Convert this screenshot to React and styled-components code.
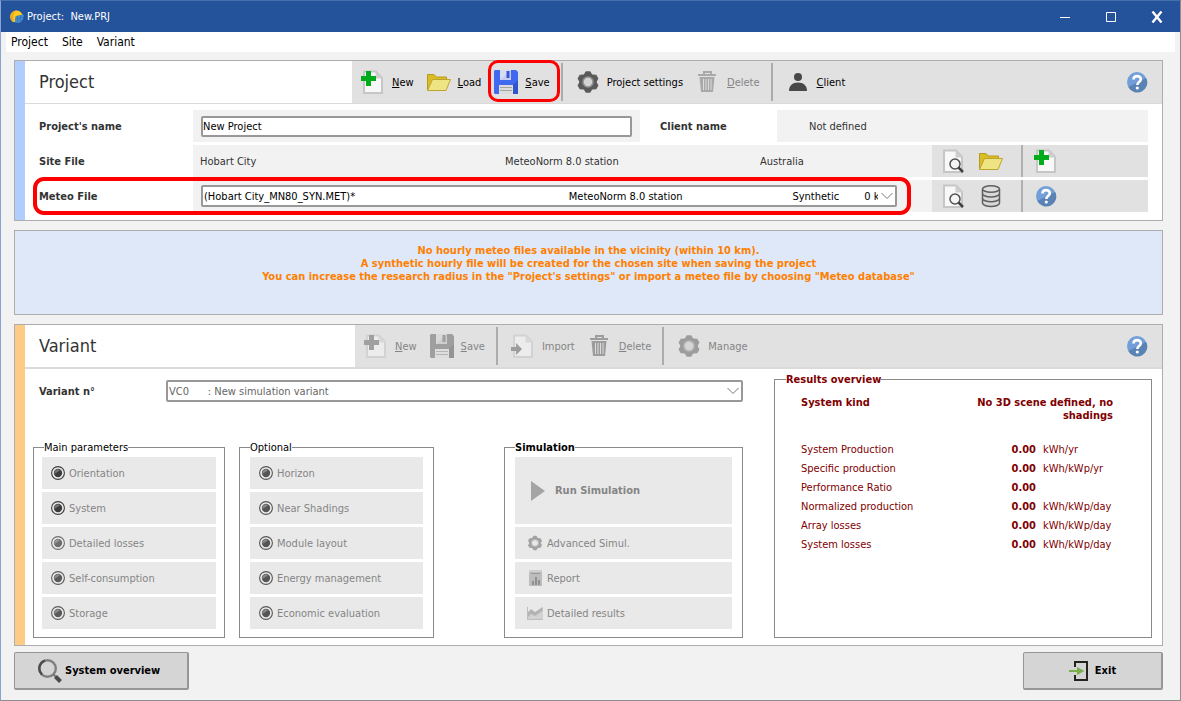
import React from 'react'
import {useState} from 'react'
import styled, {createGlobalStyle} from 'styled-components'

const NBSP = '\u00a0';

const mainParameters = [
  {name: 'Orientation', color: '#3c3c3c'},
  {name: 'System', color: '#3c3c3c'},
  {name: 'Detailed losses', color: '#6e6e6e'},
  {name: 'Self-consumption', color: '#5a5a5a'},
  {name: 'Storage', color: '#5a5a5a'},
];

const optional = ['Horizon', 'Near Shadings', 'Module layout', 'Energy management', 'Economic evaluation'];

const results = [
  {name: 'System Production', value: '0.00', unit: 'kWh/yr'},
  {name: 'Specific production', value: '0.00', unit: 'kWh/kWp/yr'},
  {name: 'Performance Ratio', value: '0.00', unit: ''},
  {name: 'Normalized production', value: '0.00', unit: 'kWh/kWp/day'},
  {name: 'Array losses', value: '0.00', unit: 'kWh/kWp/day'},
  {name: 'System losses', value: '0.00', unit: 'kWh/kWp/day'},
];

// the meteo list shows its columns padded with hard spaces
const meteoFile = '(Hobart City_MN80_SYN.MET)*' + NBSP.repeat(68)
  + 'MeteoNorm 8.0 station' + NBSP.repeat(35)
  + 'Synthetic' + NBSP.repeat(8) + '0 km';

const variantName = 'VC0' + NBSP.repeat(6) + ': New simulation variant';

/* ---------- icons ---------- */

function Icon({size = 24, children}) {
  return (
    <svg width={size} height={size} viewBox={`0 0 ${size} ${size}`} aria-hidden="true">
      {children}
    </svg>
  )
}

function Page({off}) {
  return (
    <>
      <path d="M3 1.5H15L21 8V23H3Z" fill={off ? '#ececec' : '#f8f8f8'} stroke={off ? '#d2d2d2' : '#c6c6c6'} strokeWidth="2"/>
      <path d="M14.5 1V8.5H21.5Z" fill={off ? '#d8d8d8' : '#cecece'}/>
    </>
  )
}

function NewIcon({off}) {
  return (
    <Icon>
      <Page off={off}/>
      <path d="M5 1h5v5h5v5h-5v5H5v-5H0V6h5z" fill={off ? '#a0a0a0' : '#00ac1c'}/>
    </Icon>
  )
}

function ImportIcon() {
  return (
    <Icon>
      <Page off/>
      <path d="M0 13h5V9l6 6-6 6v-4H0z" fill="#9c9c9c"/>
    </Icon>
  )
}

function SearchFileIcon() {
  return (
    <Icon>
      <Page/>
      <circle cx="14" cy="15" r="5" fill="#f4f4f4" stroke="#505050" strokeWidth="1.5"/>
      <path d="M17.5 18.5L22 23" stroke="#404040" strokeWidth="2.5"/>
    </Icon>
  )
}

function FolderIcon() {
  return (
    <Icon>
      <path d="M.5 20V4.500H7L9.500 7H19.500V11" fill="#d9bd26" stroke="#b89b1c"/>
      <path d="M5.500 9.500H23.500L19 20.500H.5Z" fill="#eee483" stroke="#bfa42c"/>
    </Icon>
  )
}

function SaveIcon({off}) {
  return (
    <Icon>
      <path d="M0 1 1 0H22L24 2V24H1L0 23Z" fill={off ? '#9f9f9f' : '#4169f0'}/>
      <path d="M24 10V24H10Z" fill={off ? '#949494' : '#3355cc'}/>
      <path d="M6 0H17V10H6Z" fill={off ? '#d9d9d9' : '#d5dcf4'}/>
      <path d="M6 10 17 0V10Z" fill={off ? '#cecece' : '#c4cdee'}/>
      <path d="M12.500 1H15.500V8H12.500Z" fill={off ? '#9f9f9f' : '#3558d8'}/>
      <path d="M5 15H19V24H5Z" fill={off ? '#dedede' : '#dcdcdc'}/>
      <path d="M6 17.500H18M6 20.500H18" stroke={off ? '#b5b5b5' : '#a4a4a4'}/>
    </Icon>
  )
}

function GearShape({color, ring, hole}) {
  return (
    <>
      {[0, 60, 120].map((angle) =>
        <path key={angle} d="M7.500 5 9.800 1.200H14.200L16.500 5V19L14.200 22.800H9.800L7.500 19Z" fill={color} transform={`rotate(${angle} 12 12)`}/>
      )}
      <circle cx="12" cy="12" r="5" fill={hole} stroke={ring} strokeWidth="1.600"/>
    </>
  )
}

function GearIcon({off}) {
  return (
    <Icon>
      <GearShape color={off ? '#9c9c9c' : '#5a5a5a'} ring={off ? '#b8b8b8' : '#929292'} hole={off ? '#d6d6d6' : '#d4d4d4'}/>
    </Icon>
  )
}

function SmallGearIcon() {
  return (
    <svg width="16" height="16" viewBox="0 0 24 24" aria-hidden="true">
      <GearShape color="#a2a2a2" ring="#bcbcbc" hole="#e9e9e9"/>
    </svg>
  )
}

function TrashIcon({color = '#a9a9a9'}) {
  return (
    <Icon>
      <path d="M8 4V2H15V4" fill="none" stroke={color} strokeWidth="2"/>
      <path d="M2 4H20V6H2Z" fill={color}/>
      <path d="M3.500 7H18.500L17 22H5Z" fill={color}/>
      <path d="M7.500 9V20M10 9V20M12.500 9V20M15 9V20" stroke="#dcdcdc"/>
    </Icon>
  )
}

function ClientIcon() {
  return (
    <Icon>
      <circle cx="12" cy="7" r="4" fill="#484848"/>
      <path d="M3 21C3 15.500 6.500 12.500 12 12.500S21 15.500 21 21Z" fill="#484848"/>
    </Icon>
  )
}

function DatabaseIcon() {
  return (
    <Icon>
      <path d="M4 5V19C4 21 7.500 22.500 12 22.500S20 21 20 19V5" fill="#d8d8d8"/>
      <path d="M3.500 5V19C3.500 21 7.500 22.500 12 22.500S20.500 21 20.500 19V5M3.500 9.500C3.500 11.500 7.500 13 12 13S20.500 11.500 20.500 9.500M3.500 14.300C3.500 16.300 7.500 17.800 12 17.800S20.500 16.300 20.500 14.300" fill="none" stroke="#5e5e5e" strokeWidth="1.500"/>
      <ellipse cx="12" cy="5" rx="8.500" ry="3.200" fill="#dedede" stroke="#5e5e5e" strokeWidth="1.500"/>
    </Icon>
  )
}

function HelpIcon() {
  return (
    <Icon>
      <circle cx="12" cy="12" r="10" fill="#739fd9"/>
      <path d="M21.200 8A10 10 0 0 1 3.300 17Z" fill="#5a82b4"/>
      <path d="M8.500 9.500C8.500 5 15.800 5 15.800 9.300 15.800 12 12.300 12 12.300 15" fill="none" stroke="#fff" strokeWidth="2.600"/>
      <circle cx="12.300" cy="18" r="1.600" fill="#fff"/>
    </Icon>
  )
}

function LampIcon({color}) {
  return (
    <Icon size={14}>
      <circle cx="7" cy="7" r="6.400" fill="#ededed" stroke={color} strokeWidth="1.100"/>
      <circle cx="7" cy="7" r="4.200" fill={color}/>
      <path d="M3.500 8A3.500 3.500 0 0 1 9 4.200Z" fill="#fff" opacity=".3"/>
    </Icon>
  )
}

function PlayIcon() {
  return (
    <Icon size={20}>
      <path d="M2 0 16 10 2 20Z" fill="#a4a4a4"/>
    </Icon>
  )
}

function ReportIcon() {
  return (
    <Icon size={16}>
      <path d="M2 0H15V16H2Z" fill="#bdbdbd"/>
      <path d="M2 0H15V2H2Z" fill="#d0d0d0"/>
      <path d="M4 3.500H13" stroke="#999"/>
      <path d="M5 11H7V15H5ZM8 7H10V15H8ZM11 10H13V15H11Z" fill="#8f8f8f"/>
    </Icon>
  )
}

function CurveIcon() {
  return (
    <Icon size={16}>
      <path d="M0 2V14H16V2L9 9 4 6 0 10Z" fill="#d2d2d2"/>
      <path d="M1 7 4 4 8 7 15.500 2V6L8 11 4 9 1 12Z" fill="#b4b4b4"/>
      <path d="M.5 2V14.500H16" fill="none" stroke="#bdbdbd"/>
    </Icon>
  )
}

function MagnifierIcon() {
  return (
    <Icon>
      <circle cx="9.500" cy="9.500" r="8.300" fill="none" stroke="#808080" strokeWidth="2.400"/>
      <path d="M4 15.500A8.300 8.300 0 0 1 7 1.600" fill="none" stroke="#4c4c4c" strokeWidth="2.400"/>
      <path d="M15.500 15.500 18 18" stroke="#777" strokeWidth="2"/>
      <path d="M17.500 17.500 22.500 22.500" stroke="#4a4a4a" strokeWidth="4"/>
    </Icon>
  )
}

function ExitIcon() {
  return (
    <Icon size={20}>
      <path d="M6 6V1H18V19H6V14" fill="none" stroke="#25231f" strokeWidth="2"/>
      <path d="M0 10H9" stroke="#7ab04c" strokeWidth="2"/>
      <path d="M8 6 15.500 10 8 14Z" fill="#7ab04c"/>
    </Icon>
  )
}

function LogoIcon() {
  return (
    <Icon size={14}>
      <path d="M3 12A6.300 6.300 0 1 1 12.500 5L6 6 5 12Z" fill="#ffc91f"/>
      <path d="M1.500 10.500C-.5 6 2 1.500 6 .5 3 3.500 2.500 7 4 12.500Z" fill="#efa61c"/>
      <path d="M5.500 6.500 13.500 4.500C14 8 12.500 11.500 9 13L5 12.500Z" fill="#4390cf"/>
      <path d="M8 6 7.500 12.500M11 5 10 12M5.500 9 13.500 7.200" stroke="#2b68ad" strokeWidth=".6"/>
    </Icon>
  )
}

function Chevron() {
  return (
    <ChevronSvg width="12" height="8" viewBox="0 0 12 8" aria-hidden="true">
      <path d="M.5 1 6 6.500 11.500 1" fill="none" stroke="#777"/>
    </ChevronSvg>
  )
}

/* ---------- page ---------- */

// the first letter is the shortcut key
function Shortcut({text}) {
  return <span><u>{text[0]}</u>{text.slice(1)}</span>
}

function App() {

  const [projectName, setProjectName] = useState('New Project');

  return (
    <Window>
      <GlobalStyle/>
      <TitleBar>
        <LogoIcon/>
        <WindowTitle>Project:{NBSP} New.PRJ</WindowTitle>
        <WindowButton aria-label="Minimize">
          <Icon size={12}><path d="M1 6.500H11" stroke="#fff"/></Icon>
        </WindowButton>
        <WindowButton aria-label="Maximize">
          <Icon size={12}><path d="M1.500 1.500H10.500V10.500H1.500Z" fill="none" stroke="#fff"/></Icon>
        </WindowButton>
        <WindowButton aria-label="Close">
          <Icon size={12}><path d="M1.500 .5 10.500 11.500M10.500 .5 1.500 11.500" stroke="#fff" strokeWidth="2.400"/></Icon>
        </WindowButton>
      </TitleBar>
      <MenuBar>
        <MenuItem>Project</MenuItem>
        <MenuItem>Site</MenuItem>
        <MenuItem>Variant</MenuItem>
      </MenuBar>

      <Content>
        <Card $accent="#b0cdfd">
          <CardHeader $line="1px">
            <Title $width="327px">Project</Title>
            <Toolbar>
              <ToolButton><NewIcon/><Shortcut text="New"/></ToolButton>
              <ToolButton><FolderIcon/><Shortcut text="Load"/></ToolButton>
              <ToolButton><SaveIcon/><Shortcut text="Save"/><SaveMark/></ToolButton>
              <Separator/>
              <ToolButton><GearIcon/>Project settings</ToolButton>
              <ToolButton disabled><TrashIcon/><Shortcut text="Delete"/></ToolButton>
              <Separator/>
              <ToolButton><ClientIcon/><Shortcut text="Client"/></ToolButton>
              <HelpButton aria-label="Project help"><HelpIcon/></HelpButton>
            </Toolbar>
          </CardHeader>
          <ProjectBody>
            <Row>
              <Label htmlFor="project-name">Project's name</Label>
              <NameCell>
                <TextInput id="project-name" value={projectName} onChange={(e) => setProjectName(e.target.value)}/>
              </NameCell>
              <ClientLabel>Client name</ClientLabel>
              <ClientCell>Not defined</ClientCell>
            </Row>
            <Row>
              <Label as="span">Site File</Label>
              <SiteCell>
                <span>Hobart City</span>
                <span>MeteoNorm 8.0 station</span>
                <span>Australia</span>
              </SiteCell>
              <RowTools>
                <ToolButton aria-label="View site"><SearchFileIcon/></ToolButton>
                <ToolButton aria-label="Open site"><FolderIcon/></ToolButton>
                <RowSeparator/>
                <ToolButton aria-label="New site"><NewIcon/></ToolButton>
              </RowTools>
            </Row>
            <Row>
              <Label htmlFor="meteo-file">Meteo File</Label>
              <MeteoCell>
                <SelectBox>
                  <Select id="meteo-file">
                    <option>{meteoFile}</option>
                  </Select>
                  <Chevron/>
                </SelectBox>
              </MeteoCell>
              <RowTools>
                <ToolButton aria-label="View meteo file"><SearchFileIcon/></ToolButton>
                <ToolButton aria-label="Meteo database"><DatabaseIcon/></ToolButton>
                <RowSeparator/>
                <ToolButton aria-label="Meteo help"><HelpIcon/></ToolButton>
              </RowTools>
              <MeteoMark/>
            </Row>
          </ProjectBody>
        </Card>

        <Message>
          <p>No hourly meteo files available in the vicinity (within 10 km).</p>
          <p>A synthetic hourly file will be created for the chosen site when saving the project</p>
          <p>You can increase the research radius in the "Project's settings" or import a meteo file by choosing "Meteo database"</p>
        </Message>

        <Card $accent="#fecb87">
          <CardHeader $line="2px">
            <Title $width="330px">Variant</Title>
            <Toolbar>
              <ToolButton disabled><NewIcon off/><Shortcut text="New"/></ToolButton>
              <ToolButton disabled><SaveIcon off/><Shortcut text="Save"/></ToolButton>
              <Separator/>
              <ToolButton disabled><ImportIcon/>Import</ToolButton>
              <ToolButton disabled><TrashIcon color="#9c9c9c"/><Shortcut text="Delete"/></ToolButton>
              <Separator/>
              <ToolButton disabled><GearIcon off/>Manage</ToolButton>
              <HelpButton aria-label="Variant help"><HelpIcon/></HelpButton>
            </Toolbar>
          </CardHeader>
          <VariantBody>
            <VariantMain>
              <VariantRow>
                <VariantLabel htmlFor="variant">Variant n°</VariantLabel>
                <SelectBox>
                  <Select id="variant" disabled>
                    <option>{variantName}</option>
                  </Select>
                  <Chevron/>
                </SelectBox>
              </VariantRow>
              <Groups>
                <Group>
                  <Legend>Main parameters</Legend>
                  <GroupList>
                    {mainParameters.map((item) =>
                      <GroupButton key={item.name} disabled><LampIcon color={item.color}/>{item.name}</GroupButton>
                    )}
                  </GroupList>
                </Group>
                <Group $wide>
                  <Legend $wide>Optional</Legend>
                  <GroupList>
                    {optional.map((name) =>
                      <GroupButton key={name} disabled><LampIcon color="#555"/>{name}</GroupButton>
                    )}
                  </GroupList>
                </Group>
                <SimulationGroup $wide>
                  <Legend $wide $bold>Simulation</Legend>
                  <GroupList>
                    <RunButton disabled><PlayIcon/>Run Simulation</RunButton>
                    <SimulationButton disabled><SmallGearIcon/>Advanced Simul.</SimulationButton>
                    <SimulationButton disabled><ReportIcon/>Report</SimulationButton>
                    <SimulationButton disabled><CurveIcon/>Detailed results</SimulationButton>
                  </GroupList>
                </SimulationGroup>
              </Groups>
            </VariantMain>
            <Results>
              <Legend $bold>Results overview</Legend>
              <SystemKind>
                <span>System kind</span>
                <KindValue>No 3D scene defined, no shadings</KindValue>
              </SystemKind>
              <ResultTable>
                <tbody>
                  {results.map((row) =>
                    <tr key={row.name}>
                      <th scope="row">{row.name}</th>
                      <ValueCell>{row.value}</ValueCell>
                      <UnitCell>{row.unit}</UnitCell>
                    </tr>
                  )}
                </tbody>
              </ResultTable>
            </Results>
          </VariantBody>
        </Card>

        <Footer>
          <OverviewButton><MagnifierIcon/>System overview</OverviewButton>
          <ExitButton><ExitIcon/>Exit</ExitButton>
        </Footer>
      </Content>
    </Window>
  )
}

const GlobalStyle = createGlobalStyle`
*{
  box-sizing: border-box;
}
body{
  margin: 0;
  background: #f2f2f2;
}
body, button, input, select{
  font-family: "DejaVu Sans Condensed", "DejaVu Sans", sans-serif;
  font-size: 11px;
  line-height: 13px;
}
button{
  border: none;
  background: none;
  padding: 0;
}
p{
  margin: 0;
}
svg{
  display: block;
  flex-shrink: 0;
}
`
const Window = styled.div`
min-height: 100vh;
border: 1px solid #8e8e8e;
border-left-color: #87a3d3;
border-top-color: #466fa9;
background: #f2f2f2;
color: #333;
`
const TitleBar = styled.header`
display: flex;
align-items: center;
height: 31px;
padding-left: 9px;
background: #25539b;
color: white;
`
const WindowTitle = styled.span`
flex: 1;
padding-left: 3px;
`
const WindowButton = styled.button`
display: flex;
align-items: center;
justify-content: center;
width: 46px;
height: 31px;
color: white;
`
const MenuBar = styled.nav`
display: flex;
align-items: center;
gap: 14px;
height: 20px;
margin: 0 5px;
padding-left: 5px;
background: white;
`
const MenuItem = styled.button`
font-size: 12px;
color: black;
`
const Content = styled.main`
display: flex;
flex-direction: column;
gap: 9px;
padding: 8px 17px 10px 13px;
`
const Card = styled.section`
border: 1px solid #adadad;
background: linear-gradient(to right, ${(props) => props.$accent} 10px, white 10px);
padding-left: 10px;
`
const CardHeader = styled.div`
display: flex;
border-bottom: ${(props) => props.$line} solid #dadada;
`
const Title = styled.h1`
flex: none;
width: ${(props) => props.$width};
margin: 0;
padding-left: 14px;
font-size: 18px;
font-weight: normal;
line-height: 42px;
`
const Toolbar = styled.div`
flex: 1;
display: flex;
align-items: center;
gap: 13px;
height: 42px;
padding: 0 13px 0 9px;
background: #e1e1e1;
`
const ToolButton = styled.button`
position: relative;
display: flex;
align-items: center;
gap: 7px;
color: black;
white-space: nowrap;
&:disabled{
  color: #858585;
}
`
const HelpButton = styled(ToolButton)`
margin-left: auto;
`
const Separator = styled.div`
width: 2px;
height: 38px;
margin-left: -2px;
background: #acacac;
`
const SaveMark = styled.span`
position: absolute;
inset: -10px -10px -8px -6px;
border: 3px solid #fe0000;
border-radius: 10px;
pointer-events: none;
z-index: 1;
`
const ProjectBody = styled.div`
display: flex;
flex-direction: column;
gap: 3px;
padding: 6px 14px 8px;
`
const Row = styled.div`
position: relative;
display: flex;
align-items: center;
height: 32px;
`
const Label = styled.label`
flex: none;
width: 154px;
font-weight: bold;
`
const Cell = styled.div`
display: flex;
align-items: center;
align-self: stretch;
background: #f2f2f2;
`
const NameCell = styled(Cell)`
flex: 431 1 0;
padding: 0 8px;
`
const TextInput = styled.input`
width: 100%;
height: 21px;
padding: 0;
border: 2px solid #989898;
border-radius: 2px;
background: white;
color: black;
`
const ClientLabel = styled.span`
width: 137px;
padding-left: 20px;
font-weight: bold;
`
const ClientCell = styled(Cell)`
flex: 339 1 0;
padding-left: 32px;
`
const SiteCell = styled(Cell)`
flex: 1;
display: grid;
grid-template-columns: 305fr 255fr 172fr;
padding-left: 7px;
`
const MeteoCell = styled(Cell)`
flex: 1;
min-width: 0;
padding: 0 35px 0 8px;
`
const RowTools = styled.div`
display: flex;
align-items: center;
gap: 14px;
width: 216px;
height: 32px;
padding-left: 9px;
background: #e1e1e1;
`
const RowSeparator = styled.div`
width: 2px;
height: 32px;
margin: 0 -3px 0 4px;
background: #b0b0b0;
`
const MeteoMark = styled.span`
position: absolute;
inset: -3px 237px -3px -6px;
border: 4px solid #fe0000;
border-radius: 11px;
pointer-events: none;
`
const SelectBox = styled.div`
position: relative;
flex: 1;
min-width: 0;
`
const Select = styled.select`
display: block;
width: 100%;
height: 22px;
padding: 0 17px 0 1px;
border: 2px solid #989898;
border-radius: 2px;
appearance: none;
background: white;
color: black;
&:disabled{
  opacity: 1;
  color: #666;
}
`
const ChevronSvg = styled.svg`
position: absolute;
right: 4px;
top: 7px;
pointer-events: none;
`
const Message = styled.div`
min-height: 85px;
padding-top: 13px;
border: 1px solid #adadad;
background: #dee8f8;
color: #ff8000;
font-weight: bold;
text-align: center;
`
const VariantBody = styled.div`
display: grid;
grid-template-columns: 710fr 378fr;
gap: 31px;
padding: 4px 10px 7px 8px;
`
const VariantMain = styled.div`
display: flex;
flex-direction: column;
gap: 39px;
padding-top: 7px;
`
const VariantRow = styled.div`
display: flex;
align-items: center;
padding-left: 6px;
`
const VariantLabel = styled(Label)`
width: 127px;
`
const Groups = styled.div`
display: grid;
grid-template-columns: 192fr 195fr 295fr;
gap: 14px;
`
const Group = styled.fieldset`
min-width: 0;
margin: 0;
padding: 3px ${(props) => props.$wide ? '10px' : '8px'} 8px;
border: 1px solid #8a8a8a;
`
const SimulationGroup = styled(Group)`
margin-left: 56px;
`
const Legend = styled.legend`
margin-left: ${(props) => props.$wide ? '0' : '2px'};
padding: 0;
color: black;
font-weight: ${(props) => props.$bold ? 'bold' : 'normal'};
`
const GroupList = styled.div`
display: flex;
flex-direction: column;
gap: 3px;
`
const GroupButton = styled.button`
display: flex;
align-items: center;
gap: 4px;
height: 32px;
padding-left: 9px;
background: #e9e9e9;
color: #858585;
white-space: nowrap;
`
const SimulationButton = styled(GroupButton)`
padding-left: 12px;
`
const RunButton = styled(GroupButton)`
gap: 6px;
height: 67px;
padding-left: 14px;
font-weight: bold;
`
const Results = styled(Group)`
padding: 10px 38px 8px 26px;
color: #800000;
legend{
  margin-left: -15px;
  color: #800000;
}
`
const SystemKind = styled.div`
display: flex;
justify-content: space-between;
margin-bottom: 18px;
font-weight: bold;
`
const KindValue = styled.span`
width: 150px;
text-align: right;
`
const ResultTable = styled.table`
width: 100%;
border-collapse: collapse;
line-height: 19px;
th, td{
  padding: 0;
  text-align: left;
  font-weight: normal;
  white-space: nowrap;
}
`
const ValueCell = styled.td`
&&{
  text-align: right;
  font-weight: bold;
}
`
const UnitCell = styled.td`
width: 77px;
&&{
  padding-left: 7px;
}
`
const Footer = styled.footer`
display: flex;
justify-content: space-between;
margin-top: -3px;
`
const FooterButton = styled.button`
display: flex;
align-items: center;
justify-content: center;
height: 38px;
border: solid #969696;
border-width: 1px 2px 2px 1px;
border-radius: 2px;
background: #d5d5d5;
color: black;
font-weight: bold;
`
const OverviewButton = styled(FooterButton)`
justify-content: flex-start;
gap: 3px;
width: 175px;
padding-left: 23px;
`
const ExitButton = styled(FooterButton)`
gap: 6px;
width: 140px;
`
export default App
